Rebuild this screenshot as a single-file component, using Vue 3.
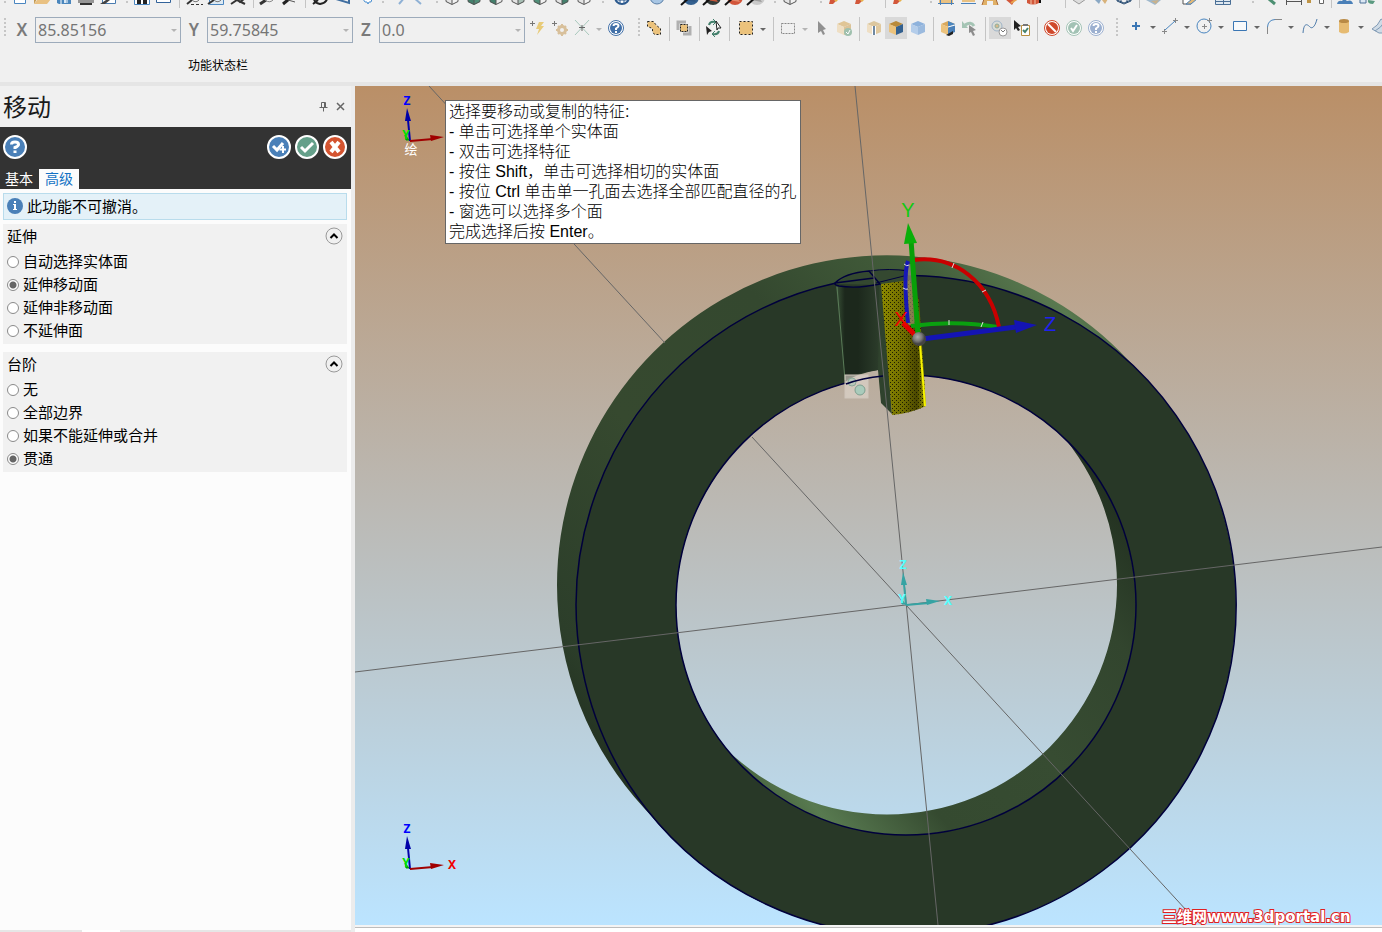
<template>
  <div class="app">
    <header class="toolbars">
      <div class="row row-top">
        <template v-for="(item, i) in topRow" :key="i">
          <i v-if="isSpacer(item)" :class="item"></i>
          <button v-else class="tool" :class="{ wide: item === 'axes' }" type="button" :aria-label="item">
            <svg :viewBox="item === 'axes' ? '0 0 46 8' : '0 0 22 8'" v-html="topIcons[item]"></svg>
          </button>
        </template>
      </div>

      <div class="row row-main">
        <i class="grip"></i>
        <div v-for="c in coords" :key="c.axis" class="coord">
          <label :for="'coord-' + c.axis">{{ c.axis }}</label>
          <div class="combo">
            <input :id="'coord-' + c.axis" v-model="c.value" type="text" />
            <button type="button" :aria-label="c.axis + ' list'"></button>
          </div>
        </div>
        <i class="g2"></i>
        <template v-for="(item, i) in mainRow" :key="i">
          <i v-if="isSpacer(item)" :class="item"></i>
          <button v-else-if="item.startsWith('drop')" :class="['drop', item]" type="button" aria-label="more"></button>
          <button
            v-else
            class="tool"
            :class="{ active: activeTools.includes(item) }"
            type="button"
            :aria-label="item"
          >
            <svg viewBox="0 0 22 22" v-html="icons[item]"></svg>
          </button>
        </template>
      </div>

      <div class="status">功能状态栏</div>
    </header>

    <main class="main">
      <aside class="side">
        <section class="panel">
          <div class="panel-title">
            <h1>移动</h1>
            <button type="button" aria-label="pin">
              <svg viewBox="0 0 11 11"><path d="M3.500 1.500h4v5h-4zM6.500 1.500v5M1.500 6.500h8M5.500 6.500v4" /></svg>
            </button>
            <button type="button" aria-label="close">
              <svg viewBox="0 0 11 11"><path d="M2 2l7 7M9 2l-7 7" stroke-width="1.500" /></svg>
            </button>
          </div>

          <div class="panel-bar">
            <div class="actions">
              <button v-for="a in actions" :key="a.name" :class="a.name" type="button" :aria-label="a.name">
                <svg viewBox="0 0 24 24">
                  <circle cx="12" cy="12" r="11" :fill="a.color" stroke="#fff" stroke-width="2" />
                  <path :d="a.path" fill="none" stroke="#fff" :stroke-width="a.stroke" />
                  <path v-if="a.extra" :d="a.extra" fill="none" stroke="#fff" stroke-width="2" />
                </svg>
              </button>
            </div>
            <div class="tabs">
              <button
                v-for="t in tabs"
                :key="t"
                type="button"
                :class="{ current: t === tab }"
                @click="tab = t"
              >{{ t }}</button>
            </div>
          </div>

          <div class="notice">
            <svg viewBox="0 0 16 16">
              <circle cx="8" cy="8" r="8" fill="#4a80b8" />
              <path d="M7 3h2v2H7zM6 6h3v5h1v1H6v-1h1V7H6z" fill="#fff" />
            </svg>
            <span>此功能不可撤消。</span>
          </div>

          <fieldset v-for="g in groups" :key="g.title" class="group">
            <div class="group-head">
              <span>{{ g.title }}</span>
              <button type="button" aria-label="collapse">
                <svg viewBox="0 0 18 18">
                  <circle cx="9" cy="9" r="8" fill="#f0f0f0" stroke="#999" />
                  <path d="M5.500 11L9 7.500l3.500 3.500" fill="none" stroke="#000" stroke-width="2" />
                </svg>
              </button>
            </div>
            <label v-for="o in g.options" :key="o">
              <input v-model="g.selected" type="radio" :name="g.title" :value="o" />
              <span>{{ o }}</span>
            </label>
          </fieldset>
        </section>
        <div class="side-tabs"><i></i></div>
      </aside>

      <section class="work">
        <div class="viewport">
          <svg class="scene" viewBox="355 86 1027 839" preserveAspectRatio="xMidYMid slice">
            <defs>
              <linearGradient id="outer" gradientUnits="userSpaceOnUse" x1="620" y1="840" x2="1150" y2="350">
                <stop offset="0" stop-color="#1d2a1c" />
                <stop offset="0.14" stop-color="#2c3e2a" />
                <stop offset="0.4" stop-color="#36492f" />
                <stop offset="0.65" stop-color="#34482f" />
                <stop offset="0.85" stop-color="#435e3b" />
                <stop offset="0.95" stop-color="#597950" />
                <stop offset="1" stop-color="#3f5838" />
              </linearGradient>
              <linearGradient id="inner" gradientUnits="userSpaceOnUse" x1="730" y1="760" x2="1110" y2="440">
                <stop offset="0" stop-color="#48643f" />
                <stop offset="0.07" stop-color="#587a50" />
                <stop offset="0.25" stop-color="#354a30" />
                <stop offset="0.5" stop-color="#374c32" />
                <stop offset="0.75" stop-color="#32452e" />
                <stop offset="1" stop-color="#1d2a1c" />
              </linearGradient>
              <linearGradient id="slot">
                <stop offset="0" stop-color="#3a5238" />
                <stop offset="0.2" stop-color="#1c281c" />
                <stop offset="0.5" stop-color="#1c281c" />
                <stop offset="1" stop-color="#2c3d2b" />
              </linearGradient>
              <linearGradient id="gold">
                <stop offset="0" stop-color="#8c8900" />
                <stop offset="0.5" stop-color="#706d00" />
                <stop offset="0.8" stop-color="#4a4700" />
                <stop offset="1" stop-color="#a5a200" />
              </linearGradient>
              <radialGradient id="ball" cx="0.4" cy="0.35">
                <stop offset="0" stop-color="#aaa" />
                <stop offset="0.6" stop-color="#7b7b7b" />
                <stop offset="1" stop-color="#444" />
              </radialGradient>
              <pattern id="dots" width="4" height="4" patternUnits="userSpaceOnUse">
                <path d="M0 0h1v1H0zM2 2h1v1H2z" fill="#1c1c00" />
              </pattern>
              <!-- limits the bore wall to what shows through the front opening -->
              <clipPath id="bore"><circle cx="906" cy="605" r="230" /></clipPath>
            </defs>

            <!-- ring -->
            <path
              fill="url(#outer)"
              fill-rule="evenodd"
              d="M557 585a330 330 0 0 1 571.600-224.500l19.400 20.500A330 330 0 0 1 663 829l-19-21A330 330 0 0 1 557 585z
                 M676 605a230 230 0 1 0 460 0a230 230 0 1 0-460 0z"
            />
            <path
              fill="url(#inner)"
              fill-rule="evenodd"
              clip-path="url(#bore)"
              d="M670 370h480v480H670zM657 584.500a230 230 0 1 0 460 0a230 230 0 1 0-460 0z"
            />
            <path
              fill="#283827"
              fill-rule="evenodd"
              d="M576 605.500a330 330 0 1 0 660 0a330 330 0 1 0-660 0zM676 605a230 230 0 1 0 460 0a230 230 0 1 0-460 0z"
            />
            <g fill="none" stroke="#00003c" stroke-width="1.500">
              <path d="M912 275.500A330 330 0 1 1 836 283" />
              <circle cx="906" cy="605" r="230" />
            </g>

            <!-- keyway -->
            <path d="M845 382Q858 373 878 370L883 378Q865 379 848 384z" fill="#bcb0a2" />
            <path d="M835 284Q850 272 868 271L905 269V282L880 285z" fill="#344830" />
            <path d="M836 285Q858 290 880 285L878 370Q858 372 845 380z" fill="url(#slot)" />
            <path d="M837 287L845 380" stroke="#5a7b58" />
            <path d="M879 284L882 284L892 414L881 403L878 370z" fill="#2f422d" />
            <path d="M881 284L910 280L919 300L926 406Q912 413 892 415z" fill="url(#gold)" />
            <path d="M881 284L910 280L919 300L926 406Q912 413 892 415z" fill="url(#dots)" />
            <path d="M920 344L925 406" stroke="#f6f400" stroke-width="2" />
            <g fill="none" stroke="#00003c" stroke-width="1.500">
              <path d="M835 283Q845 273 869 271L880 284Q857 289 839 286Q834 285 835 283L874 278" />
              <path d="M869 271Q890 268 908 271M876 283L908 275" stroke-width="1" />
            </g>

            <!-- construction axes -->
            <g stroke="#666" fill="none">
              <path d="M429 86L665 343M752 437L906 605L1187 911" />
              <path d="M355 672L1382 547" />
              <path d="M855 86L938 925" />
            </g>

            <!-- snap badge -->
            <g stroke="#cfc6bc" fill="#e2dbd2" fill-opacity="0.6">
              <rect x="845" y="375" width="23" height="23" />
              <circle cx="852" cy="382" r="4" fill="#a9c4b6" stroke="#8aa99a" />
              <circle cx="860" cy="390" r="5" fill="#a9cbbb" fill-opacity="1" stroke="#7f9f90" />
            </g>
            <path d="M846 384Q862 378 883 376" fill="none" stroke="#00003c" stroke-width="1.500" />

            <!-- move gizmo -->
            <g fill="none">
              <path d="M906 264L914 264L917 325L908 325z" fill="#b6a49a" fill-opacity="0.5" />
              <path d="M908 261Q903 275 908 323" stroke="#1717b8" stroke-width="4" />
              <path d="M911 326Q955 320 998 327" stroke="#0aa00f" stroke-width="4" />
              <path d="M914 260C955 255 990 282 999 327" stroke="#c90000" stroke-width="4" />
              <path d="M903 323L917 337" stroke="#e00000" stroke-width="5" />
              <path d="M911 240L918 335" stroke="#08a008" stroke-width="5" />
              <path d="M908 223L904 244L917 243z" fill="#0aaf0a" />
              <path d="M922 339L1016 327" stroke="#1414b4" stroke-width="5" />
              <path d="M1014 320L1037 325L1016 333z" fill="#1414b4" />
              <path
                d="M954 263l-2 5M982 292l4-2M949 320v5M983 322l-2 5M904 264q3 3 5 1M903 288q3 2 5 1"
                stroke="#ddd"
              />
              <circle cx="919" cy="339" r="7" fill="url(#ball)" />
            </g>
            <g class="gizmo-text">
              <text x="908" y="217" fill="#12c912">Y</text>
              <text x="901" y="326" fill="#f00000">X</text>
              <text x="1050" y="331" fill="#2020f0">Z</text>
            </g>

            <!-- origin triads -->
            <g v-for="t in triads" :key="t.y" :transform="`translate(${t.x} ${t.y})`" class="triad">
              <path d="M0 0L-2 -21" :stroke="t.z" stroke-width="2" />
              <path d="M-3 -33L-5 -20L1 -20z" :fill="t.z" />
              <path d="M0 0L23 -2" :stroke="t.xAxis" stroke-width="2" />
              <path d="M34 -4L20 -6L21 0z" :fill="t.xAxis" />
              <path d="M-5 -6L-1 -1L-4 -1z" :fill="t.yAxis" :stroke="t.yAxis" />
              <text x="-3" y="-36" :fill="t.zText">Z</text>
              <text x="-4" y="-2" :fill="t.yText">Y</text>
              <text v-if="t.xText" x="42" y="0" :fill="t.xText">X</text>
            </g>
            <text class="sketch-tag" x="411" y="154">绘</text>
            <text class="mark" x="1162" y="922"><tspan class="mark-cn">三维网</tspan>www.3dportal.cn</text>
          </svg>

          <div class="prompt">
            <p v-for="line in prompt" :key="line">{{ line }}</p>
          </div>
        </div>
        <div class="work-foot"></div>
      </section>
    </main>
  </div>
</template>

<script setup>
import { ref, reactive } from "vue";

const spacers = ["grip", "sep", "g2", "g4", "g8", "g12", "g16"];
const isSpacer = (name) => spacers.includes(name);

const coords = reactive([
  { axis: "X", value: "85.85156" },
  { axis: "Y", value: "59.75845" },
  { axis: "Z", value: "0.0" },
]);

const topRow = (
  "grip new open save print preview g4 grip find window sep zoomWindow zoomPage zoomCross sep zoomIn zoomOut " +
  "sep rotate g4 plane diamond grip axes grip cube cubeFull cubeLeft cubeCorner cubeMix cubeRight cube g4 grip g4 " +
  "globe g12 sphere g12 ballBlue ballDark ballRed ballGray g4 grip cube g16 grip pencil g4 pencil g8 sep pencil " +
  "g16 grip table line part flame redBox g16 sep hand people wire sep sheet g12 sketch g12 grid g16 grip g4 " +
  "check measure bits sep team shapes"
).split(" ");

const mainRow = (
  "bolt gear cross dropLight help g8 grip merge sep overlap sep cycle sep g2 select drop sep marquee dropLight " +
  "cursor boxOk sep boxFace boxSolid boxBlue sep boxSplit undo sep history paste sep deny accept helpDim g4 g2 grip " +
  "g4 plus dropHigh segment dropHigh circle dropHigh g2 rect dropHigh fillet dropHigh g2 spline dropHigh cylinder " +
  "dropHigh g2 surface"
).split(" ");

const activeTools = ["boxSolid", "history"];

const cube = (l, r) =>
  `<path d="M5 -4V2L11 5V-4z" fill="${l}"/><path d="M17 -4V2L11 5V-4z" fill="${r}"/>` +
  `<path d="M5 -4V1.500L11 4.500L17 1.500V-4M11 4V-4" fill="none" stroke="#555"/>`;
const ball = (a, b) =>
  `<circle cx="12" cy="-3" r="8" fill="${a}"/><path d="M6 0L12 -5L17 2z" fill="${b}"/>` +
  `<path d="M2 5L11 -3" stroke="#111" stroke-width="2"/>`;

// only the lower edge of this row is on screen, so the glyphs are 8px high
const topIcons = {
  new: '<path d="M5.500 -2V3.500H16.500V-2" fill="#fff" stroke="#4a86c0"/>',
  open: '<path d="M3 4L7 -1H20L16 4z" fill="#e9c182"/><path d="M3 4V-1H6z" fill="#c59b53"/>',
  save: '<path d="M4 0H18V4H6L4 3z" fill="#4a86bd"/><path d="M8 0V4M14 0V3" stroke="#fff"/><path d="M11 0h2v3h-2z" fill="#d9e8f4"/>',
  print: '<path d="M3 0H19V3H3z" fill="#979797"/><path d="M5 4H17" stroke="#333" stroke-width="2"/>',
  preview: '<path d="M5.500 -2V3.500H18.500V-2" fill="#fff" stroke="#4a7cb0"/><path d="M3 4L9 0H13L8 4z" fill="#444"/>',
  find: '<path d="M3.500 -2V4.500H18.500V-2" fill="#fff" stroke="#4a86c0"/><path d="M6 4V0H10V4zM12 4V0H16V4z" fill="#222"/>',
  window: '<path d="M3.500 -2V2.500H17.500V-2" fill="#fff" stroke="#33639a"/>',
  zoomWindow: '<path d="M4 4L9 0" stroke="#333" stroke-width="2"/><path d="M9 0Q13 4 17 -1" fill="none" stroke="#777"/><path d="M8 4.500H20" stroke="#333" stroke-dasharray="3 2"/>',
  zoomPage: '<path d="M4.500 -2V4.500H18.500V-2" fill="#dce9f3" stroke="#4a86c0"/><path d="M3 4L9 0" stroke="#333" stroke-width="2"/><path d="M9 0Q13 4 17 -1" fill="none" stroke="#777"/>',
  zoomCross: '<path d="M4 4L10 0L18 4M8 -2L13 2L17 -1" fill="none" stroke="#333" stroke-width="2"/>',
  zoomIn: '<path d="M3 4L9 0" stroke="#333" stroke-width="3"/><path d="M8 0Q13 4 17 -1" fill="none" stroke="#888"/>',
  zoomOut: '<path d="M4 4L10 -1" stroke="#222" stroke-width="3"/><path d="M9 0L16 2" stroke="#555"/>',
  rotate: '<path d="M5 -2Q5 3 11 4Q17 3 18 -1M4 4L9 0" fill="none" stroke="#222" stroke-width="2"/>',
  plane: '<path d="M1 -1L14 3V-2" fill="none" stroke="#3f6ea0" stroke-width="2"/>',
  diamond: '<path d="M6 -1L8 2H10L11 4L12 2H14L15 -1" fill="#fff" stroke="#4a8fd0"/>',
  axes: '<path d="M12 4L18 -3M34 4L26 -3" stroke="#8fb1d5" stroke-width="2"/>',
  cube: cube("#e4e4e4", "#f2f2f2"),
  cubeFull: cube("#43806c", "#4f8f78"),
  cubeLeft: cube("#43806c", "#ededed"),
  cubeCorner: cube("#e4e4e4", "#a8bfb5"),
  cubeMix: cube("#4f8f78", "#f2f2f2"),
  cubeRight: cube("#e4e4e4", "#43806c"),
  globe: '<circle cx="11" cy="-3" r="7" fill="#fff" stroke="#2c5a8e" stroke-width="2"/><path d="M4 0H18M9 -3V4M13 -3V4" stroke="#2c5a8e"/>',
  sphere: '<circle cx="12" cy="-3" r="7" fill="#a8c6e4" stroke="#5b7fa6"/>',
  ballBlue: ball("#33608f", "#2d5582"),
  ballDark: ball("#343c3a", "#c4573c"),
  ballRed: ball("#d2553a", "#e48a6c"),
  ballGray: ball("#c9c9c9", "#9b9b9b"),
  pencil: '<path d="M5 0H12L8 4H4z" fill="#d2573a"/><path d="M9 0H13L11 2z" fill="#e8b24c"/>',
  table: '<path d="M4 0H18V3H4z" fill="#e9c182"/><path d="M5.500 0V5M16.500 0V5M3 3.500H19" stroke="#4a80b8"/>',
  line: '<path d="M5 0H18V2H5z" fill="#e9c182"/><path d="M4 3.500H19" stroke="#4a80b8"/>',
  part: '<path d="M3 5L5 -1H17L19 5H14V1H8V5z" fill="#e0b066"/><path d="M3 5L5 -1M19 5L17 -1" stroke="#a86a3a"/>',
  flame: '<path d="M4 -1L11 5L14 0z" fill="#d2573a"/><path d="M10 3L16 -1" stroke="#e8a24c" stroke-width="2"/>',
  redBox: '<path d="M4 -1V3Q10 6 16 3V-1z" fill="#d2573a"/><path d="M8 0V4M12 0V4" stroke="#f1c6a8"/><path d="M17 0V3" stroke="#111" stroke-width="2"/>',
  hand: '<path d="M4 0L10 4L17 -1" fill="#ddd" stroke="#9a9a9a"/>',
  people: '<path d="M4 0L8 4L10 0z" fill="#8aa8c4"/><path d="M11 0L14 4L17 -1z" fill="#d8b27a"/>',
  wire: '<path d="M4 -1V1L11 4L18 1V-1M8 -1V3M14 -1V3M4 0L11 3L18 0" fill="none" stroke="#2c4f74"/>',
  sheet: '<path d="M3 0L12 5L18 0L14 -2z" fill="#9fb8cc"/><path d="M8 1L13 4L16 0z" fill="#c9b28c"/>',
  sketch: '<path d="M6 -1V4H14V-1" fill="#fff" stroke="#555"/><path d="M9 4L15 -1H20L14 4z" fill="#e0b878" stroke="#4a80b8"/>',
  grid: '<path d="M4.500 -2V4.500H19.500V-2M4 1.500H20M12.500 -2V4" fill="#dfe8f0" stroke="#4a6f96"/>',
  check: '<path d="M8 -1L14 4" stroke="#4c8f72" stroke-width="3"/>',
  measure: '<path d="M3.500 -1V5M18.500 -1V5M3 1.500H19" stroke="#555"/>',
  bits: '<path d="M2 0H6V3H2z" fill="#bf9445"/><path d="M14.500 -1V3.500H18.500V-1" fill="#fff" stroke="#666"/>',
  team: '<path d="M2 4Q3 0 7 1Q9 -2 12 1Q17 -1 18 4z" fill="#4a80b8"/>',
  shapes: '<path d="M3 -1V3H9V-1" fill="#dce8f4" stroke="#4a6f96"/><path d="M11 0Q10 4 16 4L18 1z" fill="#5b9a80"/>',
};

const box = (top, left, right) =>
  `<path d="M11 4L18 7L11 10L4 7z" fill="${top}"/><path d="M4 7L11 10V18L4 15z" fill="${left}"/>` +
  `<path d="M18 7L11 10V18L18 15z" fill="${right}"/>`;
const badge = (color, ring, glyph) =>
  `<circle cx="11" cy="11" r="7.500" fill="#fff" stroke="${ring}"/><circle cx="11" cy="11" r="6" fill="${color}"/>` +
  `<path d="${glyph}" fill="none" stroke="#fff" stroke-width="2"/>`;
const questionMark = "M8.500 9Q8.500 7 11 7Q13.500 7 13.500 9Q13.500 10 11 11.500V13M11 14V16";

const icons = {
  bolt: '<path d="M3 6.500H8M5.500 4V9" stroke="#777"/><path d="M12 5H17L14 9H17L10 18L12 12H9z" fill="#e8cb78"/>',
  gear: '<path d="M3 6.500H8M5.500 4V9" stroke="#777"/><circle cx="13" cy="13" r="3.500" fill="none" stroke="#d8c09b" stroke-width="3"/><path d="M13 7V9M13 17V19M7 13H9M17 13H19M9 9L10 10M16 16L17 17M17 9L16 10M9 17L10 16" stroke="#d8c09b" stroke-width="2"/>',
  cross: '<path d="M4 3L18 18M18 3L4 18" stroke="#a9c9bd"/><path d="M8 10.500H14M11 8V14" stroke="#666"/>',
  help: badge("#4270a8", "#4270a8", questionMark),
  merge: '<path d="M4.500 4.500H10.500L13.500 8.500L17.500 11.500V17.500H11.500L9.500 14.500V11.500L4.500 9.500z" fill="#ebc27c" stroke="#222" stroke-dasharray="2 2"/>',
  overlap: '<path d="M5 13V5H13M10 17H17V9" fill="none" stroke="#b0b0b0" stroke-width="3"/><path d="M7.500 7.500H14.500V14.500H7.500z" fill="#ebc27c" stroke="#222" stroke-dasharray="2 1"/>',
  cycle: '<path d="M6 8Q7 4 12 5M16 14Q15 18 10 17" fill="none" stroke="#43806c" stroke-width="2"/><path d="M10 2L13 5L10 8M12 14L9 17L12 20" fill="none" stroke="#43806c"/><path d="M3 9L9 14L6 15L4 18z" fill="#222"/><path d="M13 4L18 11L15 11L14 13z" fill="#fff" stroke="#222"/>',
  select: '<path d="M4.500 4.500H17.500V17.500H4.500z" fill="#ebc27c" stroke="#222" stroke-dasharray="2 2"/>',
  marquee: '<path d="M4.500 6.500H17.500V16.500H4.500z" fill="none" stroke="#888" stroke-dasharray="2 1"/>',
  cursor: '<path d="M7 4V16L10 14L12 18L14 17L12 13L15 12z" fill="#909090"/>',
  boxOk: box("#e0c596", "#efdfc4", "#dcc398") + '<circle cx="15" cy="15" r="4" fill="#9fc0ae"/><path d="M13 15L15 17L17 13" fill="none" stroke="#fff"/>',
  boxFace: box("#dcc79f", "#efdfc4", "#e0c99f") + '<path d="M9 9H13V18H9z" fill="#fff"/><path d="M10 9H12V18H10z" fill="#6f88a2"/>',
  boxSolid: box("#b98a3a", "#ebc27c", "#33608f"),
  boxBlue: box("#8eb2dc", "#b4cdea", "#9bbade"),
  boxSplit: box("#d8a85c", "#ebc27c", "#4a80b8") + '<path d="M11 4L18 7L11 10z" fill="#4a86c0"/><path d="M11 10L18 8" stroke="#fff"/><path d="M9 18L16 14V17L12 19z" fill="#222"/>',
  undo: '<path d="M6 8Q12 4 15 9" fill="none" stroke="#a4c4b4" stroke-width="3"/><path d="M3 4V11H9z" fill="#a4c4b4"/><path d="M10 8V16L12 15L14 19L16 18L14 14L17 13z" fill="#8c8c8c"/>',
  history: '<circle cx="8" cy="9" r="5" fill="#d9dcd6" stroke="#9fb4c8"/><circle cx="8" cy="9" r="2" fill="#d9b98c" stroke="#8fae9c"/><circle cx="14" cy="15" r="4" fill="#fff" stroke="#999"/><path d="M12 13L14 15L16 13" fill="none" stroke="#777"/>',
  paste: '<path d="M3 3V13L5 11L7 14L9 13L7 10L10 9z" fill="#222"/><path d="M10.500 8.500H18.500V18.500H10.500z" fill="#fff" stroke="#b78e3f"/><path d="M12 7H17V9H12z" fill="#777"/><path d="M12 13L14 15L17 11" fill="none" stroke="#43806c" stroke-width="2"/>',
  deny: badge("#d0492c", "#d0492c", "M7 7L15 15"),
  accept: badge("#a3c3b5", "#a3c3b5", "M8 11L10 14L14 8"),
  helpDim: badge("#9cb0d0", "#9cb0d0", questionMark),
  plus: '<path d="M7 9H15M11 5V13" stroke="#3a76b4" stroke-width="2"/>',
  segment: '<path d="M6 13L16 4" stroke="#4a86c0"/><path d="M3 14.500H8M5.500 12V17M14 3.500H19M16.500 1V6" stroke="#888"/>',
  circle: '<circle cx="11" cy="9" r="7" fill="none" stroke="#4a86c0"/><path d="M9 9.500H14M11.500 7V12M14 3.500H19M16.500 1V6" stroke="#888"/>',
  rect: '<path d="M4.500 4.500H17.500V13.500H4.500z" fill="#f7f9fb" stroke="#3a76b4"/>',
  fillet: '<path d="M4.500 17V10M12 2.500H19" stroke="#888"/><path d="M4.500 10Q5 3 12 2.500" fill="none" stroke="#4a86c0"/>',
  spline: '<path d="M4 16C5 4 9 8 11 10S16 10 18 2" fill="none" stroke="#4a78a8"/>',
  cylinder: '<path d="M6 4V15Q11 18 16 15V4z" fill="#e6bb72"/><ellipse cx="11" cy="4" rx="5" ry="2" fill="#b98a45"/>',
  surface: '<path d="M3 12Q9 9 12 2L20 6V16L10 16z" fill="#cfdbe6" stroke="#7f99b4"/><path d="M6 14Q12 11 16 4" fill="none" stroke="#7f99b4"/>',
};

const actions = [
  {
    name: "panel-help",
    color: "#4a80b8",
    stroke: 3,
    path: "M8.500 9.500Q8.500 7 12 7Q15.500 7 15.500 9.500Q15.500 11 12 12.500V14M12 15.500V18",
  },
  { name: "apply-new", color: "#4a80b8", stroke: 3, path: "M6 11L10 15L16 8", extra: "M12.500 14.500H19M16 11V18" },
  { name: "ok", color: "#65a08a", stroke: 3, path: "M6 12L10 16L18 8" },
  { name: "cancel", color: "#d45430", stroke: 4, path: "M8 7L16 17M16 7L8 17" },
];

const tabs = ["基本", "高级"];
const tab = ref("高级");

const groups = reactive([
  {
    title: "延伸",
    options: ["自动选择实体面", "延伸移动面", "延伸非移动面", "不延伸面"],
    selected: "延伸移动面",
  },
  {
    title: "台阶",
    options: ["无", "全部边界", "如果不能延伸或合并", "贯通"],
    selected: "贯通",
  },
]);

const prompt = [
  "选择要移动或复制的特征:",
  "- 单击可选择单个实体面",
  "- 双击可选择特征",
  "- 按住 Shift，单击可选择相切的实体面",
  "- 按位 Ctrl 单击单一孔面去选择全部匹配直径的孔",
  "- 窗选可以选择多个面",
  "完成选择后按 Enter。",
];

const viewColors = { z: "#0000a8", xAxis: "#a00000", yAxis: "#00a000", zText: "#0000ff", yText: "#00e000" };
const worldColors = { z: "#36a3a3", xAxis: "#36a3a3", yAxis: "#36a3a3", zText: "#55ffff", yText: "#55ffff" };
const triads = [
  { x: 410, y: 141, ...viewColors },
  { x: 410, y: 869, ...viewColors, xText: "#f00000" },
  { x: 906, y: 605, ...worldColors, xText: "#55ffff" },
];
</script>

<style>
body {
  background: #f0f0f0;
}
</style>

<style scoped>
.app {
  display: flex;
  flex-direction: column;
  height: 100vh;
  overflow: hidden;
  background: #f0f0f0;
  color: #000;
  font-family: "Noto Sans", "Noto Sans CJK SC", sans-serif;
}

button {
  padding: 0;
  border: 0;
  background: none;
  font-family: inherit;
}

svg {
  display: block;
}

/* toolbars */
.toolbars {
  display: flex;
  flex-direction: column;
  flex: none;
  height: 82px;
  border-bottom: 4px solid #e5e5e5;
}

.row {
  display: flex;
  flex: none;
  align-items: flex-start;
  overflow: hidden;
  padding-left: 1px;
}

.row > * {
  flex: none;
}

.row-top {
  height: 8px;
}

.row-main {
  height: 26px;
  margin-top: 9px;
}

.tool {
  width: 22px;
  height: 22px;
}

.row-top .tool {
  height: 8px;
}

.tool.wide {
  width: 46px;
}

.tool svg {
  width: 100%;
  height: 100%;
}

.tool.active {
  background: #d9d9d9;
}

.g2 {
  width: 2px;
}

.g4 {
  width: 4px;
}

.g8 {
  width: 8px;
}

.g12 {
  width: 12px;
}

.g16 {
  width: 16px;
}

.sep {
  width: 1px;
  height: 24px;
  margin: 0 3px 0 4px;
  background: #c4c4c4;
}

.row-top .sep {
  height: 8px;
}

.grip {
  width: 2px;
  height: 20px;
  margin: 1px 3px;
  background: repeating-linear-gradient(#c6c6c6 0 2px, transparent 2px 4px);
}

.row-top .grip {
  height: 2px;
}

.coord {
  display: flex;
  align-items: center;
  height: 26px;
}

.coord label {
  width: 26px;
  color: #7a7a7a;
  font-size: 17px;
  font-weight: 600;
  line-height: 24px;
  text-align: center;
}

.combo {
  display: flex;
  box-sizing: border-box;
  width: 146px;
  height: 26px;
  border: 1px solid #9dabbb;
}

.combo input {
  flex: 1;
  min-width: 0;
  padding: 0 2px;
  border: 0;
  background: none;
  color: #757575;
  font-family: "Noto Sans", sans-serif;
  font-size: 16px;
}

.combo button,
.drop {
  display: flex;
  align-items: center;
  justify-content: center;
  width: 12px;
}

.combo button::after,
.drop::after {
  content: "";
  border: 3px solid transparent;
  border-top-color: #666;
  border-bottom: 0;
}

.combo button::after,
.dropLight::after {
  border-top-color: #b4b4b4;
}

.drop {
  height: 24px;
}

.dropHigh {
  height: 20px;
}

.status {
  padding: 14px 188px 0;
  font-size: 12px;
  line-height: 18px;
}

/* side panel */
.main {
  display: flex;
  flex: 1;
  min-height: 0;
}

.side {
  display: flex;
  flex: none;
  flex-direction: column;
  width: 351px;
  border-right: 4px solid #ececec;
}

.panel {
  flex: 1;
  background: #fcfcfc;
}

.panel-title {
  display: flex;
  align-items: center;
  height: 41px;
  padding-right: 5px;
  gap: 6px;
  background: #f0f0f0;
}

.panel-title h1 {
  flex: 1;
  margin: 0 0 0 3px;
  color: #1a1a1a;
  font-size: 24px;
  font-weight: 400;
  line-height: 40px;
}

.panel-title svg {
  width: 11px;
  height: 11px;
  fill: none;
  stroke: #666;
}

.panel-bar {
  display: flex;
  flex-direction: column;
  justify-content: space-between;
  height: 62px;
  background: #333;
}

.actions {
  display: flex;
  gap: 4px;
  padding: 8px 4px 0 3px;
}

.actions svg {
  width: 24px;
  height: 24px;
}

.panel-help {
  margin-right: auto;
}

.tabs {
  display: flex;
}

.tabs button {
  height: 20px;
  padding: 0 6px 0 5px;
  color: #fff;
  font-size: 14px;
  line-height: 20px;
}

.tabs .current {
  padding: 0 6px;
  background: #fcfcfc;
  color: #1271c4;
}

.notice {
  display: flex;
  align-items: center;
  box-sizing: border-box;
  height: 27px;
  margin: 4px;
  margin-left: 3px;
  padding: 0 3px 2px;
  gap: 4px;
  border: 1px solid #b9dcec;
  background: #e4f1f8;
  font-size: 15px;
}

.notice svg {
  width: 16px;
  height: 16px;
}

.group {
  min-width: 0;
  margin: 0 4px 8px 3px;
  padding: 0 4px 2px;
  border: 0;
  background: #f1f1f1;
  font-size: 15px;
}

.group-head {
  display: flex;
  align-items: center;
  justify-content: space-between;
  height: 24px;
  margin-bottom: 2px;
}

.group-head svg {
  width: 18px;
  height: 18px;
}

.group span {
  padding-bottom: 2px;
}

.group label {
  display: flex;
  align-items: center;
  height: 23px;
  gap: 4px;
}

.group input {
  appearance: none;
  box-sizing: border-box;
  width: 12px;
  height: 12px;
  margin: 0;
  border: 1px solid #8a8a8a;
  border-radius: 50%;
  background: #fff;
}

.group input:checked {
  background: radial-gradient(#666 0 3px, #fff 4px);
}

.side-tabs {
  height: 2px;
  padding-left: 82px;
  background: #e6e6e6;
}

.side-tabs i {
  display: block;
  width: 38px;
  height: 2px;
  background: #fff;
}

/* graphics area */
.work {
  display: flex;
  flex: 1;
  flex-direction: column;
  min-width: 0;
}

.viewport {
  position: relative;
  flex: 1;
  min-height: 0;
  overflow: hidden;
  background: linear-gradient(#ba8f67, #bbb9b4 50%, #bbe4ff);
}

.scene {
  width: 100%;
  height: 100%;
}

.gizmo-text {
  font-family: "Liberation Sans", sans-serif;
  font-size: 20px;
  text-anchor: middle;
}

.triad text {
  font-family: "Noto Sans", sans-serif;
  font-size: 12px;
  font-weight: 700;
  text-anchor: middle;
}

.sketch-tag {
  fill: #fff;
  font-size: 13px;
  text-anchor: middle;
}

.mark {
  fill: #fff;
  stroke: #e02020;
  stroke-width: 2px;
  paint-order: stroke;
  font-family: "DejaVu Sans", sans-serif;
  font-size: 15px;
  font-weight: 700;
}

.mark-cn {
  font-family: "Noto Sans CJK SC", sans-serif;
}

.prompt {
  position: absolute;
  top: 14px;
  left: 90px;
  padding: 1px 3px;
  border: 1px solid #666;
  background: #fff;
  font-family: "Liberation Sans", "Noto Sans CJK SC", sans-serif;
  font-size: 16px;
  font-weight: 300;
  line-height: 20px;
  white-space: nowrap;
}

.prompt p {
  margin: 0;
}

.work-foot {
  box-sizing: border-box;
  flex: none;
  height: 7px;
  border-top: 2px solid #f4f4f4;
  background: linear-gradient(#bdbdbd 1px, #fff 1px);
}
</style>
